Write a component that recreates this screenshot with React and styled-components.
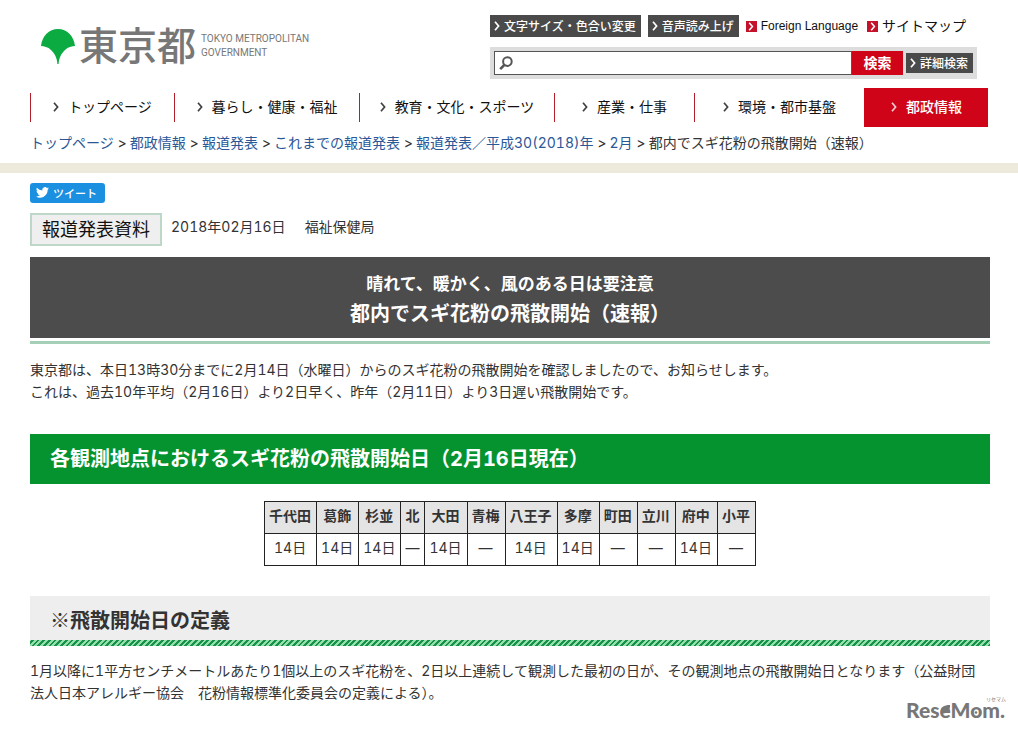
import React from "react";
import styled, { createGlobalStyle } from "styled-components";

const navItems = [
  { label: "トップページ", width: 144 },
  { label: "暮らし・健康・福祉", width: 185 },
  { label: "教育・文化・スポーツ", width: 195 },
  { label: "産業・仕事", width: 140 },
  { label: "環境・都市基盤", width: 170 },
  { label: "都政情報", width: 124, active: true },
];

const crumbs = [
  "トップページ",
  "都政情報",
  "報道発表",
  "これまでの報道発表",
  "報道発表／平成30(2018)年",
  "2月",
];

const places = [
  { name: "千代田", date: "14日" },
  { name: "葛飾", date: "14日" },
  { name: "杉並", date: "14日" },
  { name: "北", date: "—" },
  { name: "大田", date: "14日" },
  { name: "青梅", date: "—" },
  { name: "八王子", date: "14日" },
  { name: "多摩", date: "14日" },
  { name: "町田", date: "—" },
  { name: "立川", date: "—" },
  { name: "府中", date: "14日" },
  { name: "小平", date: "—" },
];

function Chevron() {
  return (
    <svg width="6" height="10" viewBox="0 0 6 10" aria-hidden="true">
      <path
        d="M1 0.8 L4.6 5 L1 9.2"
        fill="none"
        stroke="currentColor"
        strokeWidth="1.7"
      />
    </svg>
  );
}

function SearchIcon() {
  return (
    <svg width="14" height="15" viewBox="0 0 14 15" aria-hidden="true">
      <circle
        cx="8.4"
        cy="5.6"
        r="4.3"
        fill="none"
        stroke="#555"
        strokeWidth="2"
      />
      <path d="M5.4 8.8 L1.2 13.2" stroke="#555" strokeWidth="2.6" />
    </svg>
  );
}

function Bird() {
  return (
    <svg width="13" height="11" viewBox="0 0 24 20" aria-hidden="true">
      <path
        fill="#fff"
        d="M24 2.4a9.8 9.8 0 0 1-2.8.8A5 5 0 0 0 23.300.4a9.900 9.900 0 0 1-3.100 1.200 4.900 4.900 0 0 0-8.400 4.500A14 14 0 0 1 1.700 1a4.900 4.900 0 0 0 1.500 6.500 4.900 4.900 0 0 1-2.200-.6v.1a4.900 4.900 0 0 0 3.900 4.800 4.900 4.900 0 0 1-2.200.1 4.900 4.900 0 0 0 4.600 3.400A9.900 9.900 0 0 1 0 17.300a14 14 0 0 0 7.500 2.200c9.100 0 14-7.500 14-14v-.6A10 10 0 0 0 24 2.400z"
      />
    </svg>
  );
}

function Header() {
  return (
    <Top>
      <Logo href="#">
        <svg width="34" height="35" viewBox="0 0 34 35" aria-hidden="true">
          <path
            fill="#0bab41"
            d="M0 17 C1 7 8 0 17 0 C26 0 33 7 34 17 C31 17 27 18 24 21 C20 25 18 29 17.600 35 H16.400 C16 29 14 25 10 21 C7 18 3 17 0 17Z"
          />
        </svg>
        <LogoName>東京都</LogoName>
        <LogoSub>
          TOKYO METROPOLITAN
          <br />
          GOVERNMENT
        </LogoSub>
      </Logo>
      <Tools>
        <ToolRow>
          <DarkButton>
            <Chevron />
            文字サイズ・色合い変更
          </DarkButton>
          <DarkButton>
            <Chevron />
            音声読み上げ
          </DarkButton>
          <ToolLink href="#">
            <RedMark>
              <Chevron />
            </RedMark>
            <span lang="en">Foreign Language</span>
          </ToolLink>
          <ToolLink href="#">
            <RedMark>
              <Chevron />
            </RedMark>
            サイトマップ
          </ToolLink>
        </ToolRow>
        <Search onSubmit={(e) => e.preventDefault()}>
          <SearchBox>
            <SearchIcon />
            <input type="text" aria-label="検索" />
          </SearchBox>
          <SearchButton>検索</SearchButton>
          <DarkButton type="button" $low>
            <Chevron />
            詳細検索
          </DarkButton>
        </Search>
      </Tools>
    </Top>
  );
}

function App() {
  return (
    <Page>
      <GlobalStyle />
      <Header />
      <Nav>
        {navItems.map((item) => (
          <NavLink
            key={item.label}
            href="#"
            $width={item.width}
            $active={item.active}
          >
            <Chevron />
            {item.label}
          </NavLink>
        ))}
      </Nav>
      <Crumbs>
        {crumbs.map((name) => (
          <li key={name}>
            <a href="#">{name}</a>
          </li>
        ))}
        <li>都内でスギ花粉の飛散開始（速報）</li>
      </Crumbs>
      <Band />
      <Main>
        <Tweet>
          <Bird />
          ツイート
        </Tweet>
        <Meta>
          <Tag>報道発表資料</Tag>
          <span>2018年02月16日</span>
          <Bureau>福祉保健局</Bureau>
        </Meta>
        <Title>
          <small>晴れて、暖かく、風のある日は要注意</small>
          都内でスギ花粉の飛散開始（速報）
        </Title>
        <Text>
          東京都は、本日13時30分までに2月14日（水曜日）からのスギ花粉の飛散開始を確認しましたので、お知らせします。
          <br />
          これは、過去10年平均（2月16日）より2日早く、昨年（2月11日）より3日遅い飛散開始です。
        </Text>
        <GreenHeading>
          各観測地点におけるスギ花粉の飛散開始日（2月16日現在）
        </GreenHeading>
        <Table>
          <thead>
            <tr>
              {places.map((place) => (
                <th key={place.name} scope="col">
                  {place.name}
                </th>
              ))}
            </tr>
          </thead>
          <tbody>
            <tr>
              {places.map((place) => (
                <td key={place.name}>{place.date}</td>
              ))}
            </tr>
          </tbody>
        </Table>
        <GrayHeading>※飛散開始日の定義</GrayHeading>
        <Text $tight>
          1月以降に1平方センチメートルあたり1個以上のスギ花粉を、2日以上連続して観測した最初の日が、その観測地点の飛散開始日となります（公益財団法人日本アレルギー協会　花粉情報標準化委員会の定義による）。
        </Text>
      </Main>
      <Watermark>
        <small>リセマム</small>
        <svg width="100" height="26" viewBox="0 0 100 26">
          <text x="0" y="20">
            ReseMom.
          </text>
          <path d="M35 14 C34 9 38 7 44 7 C44.500 11 42 15 37 15.500Z" />
          <circle cx="70" cy="14.500" r="1.300" />
        </svg>
      </Watermark>
    </Page>
  );
}

export default App;

const GlobalStyle = createGlobalStyle`
  * {
    box-sizing: border-box;
  }
  body {
    margin: 0;
    background: #fff;
    color: #333;
    font-family: Inter, "Noto Sans CJK JP", sans-serif;
    font-size: 14px;
    line-height: 22px;
    font-variant-numeric: tabular-nums;
  }
  button, input {
    font-family: inherit;
  }
  a {
    text-decoration: none;
  }
`;

const Page = styled.div`
  position: relative;
  min-height: 100vh;
`;

const Top = styled.header`
  display: flex;
  justify-content: space-between;
  padding: 15px 41px 0;
`;

const Logo = styled.a`
  display: flex;
  align-items: center;
  height: 62px;
  color: #777;
`;

const LogoName = styled.span`
  margin-left: 4px;
  font-size: 39px;
  font-weight: 500;
  line-height: 40px;
`;

const LogoSub = styled.span`
  margin-left: 5px;
  font-family: Roboto, sans-serif;
  font-size: 10px;
  line-height: 14px;
`;

const Tools = styled.div`
  width: 487px;
`;

const ToolRow = styled.div`
  display: flex;
  align-items: center;
  gap: 7px;
  white-space: nowrap;
`;

const DarkButton = styled.button`
  display: flex;
  align-items: center;
  flex-shrink: 0;
  gap: 4px;
  height: ${(props) => (props.$low ? "20px" : "22px")};
  padding: 0 5px 1px 4px;
  border: 0;
  background: #4a4a4a;
  color: #fff;
  font-size: 12px;
  font-weight: 500;
`;

const ToolLink = styled.a`
  display: flex;
  align-items: center;
  gap: 4px;
  margin-right: 2px;
  color: #111;
  span[lang="en"] {
    font-family: "Liberation Sans", sans-serif;
    font-size: 12px;
  }
`;

const RedMark = styled.span`
  display: flex;
  align-items: center;
  justify-content: center;
  width: 11px;
  height: 11px;
  background: #c4122a;
  color: #fff;
  svg {
    height: 9px;
  }
`;

const Search = styled.form`
  display: flex;
  align-items: center;
  height: 32px;
  margin-top: 10px;
  padding: 0 4px;
  background: #ddd;
`;

const SearchBox = styled.label`
  display: flex;
  flex: 1;
  align-items: center;
  height: 24px;
  padding-left: 4px;
  border: 1px solid #555;
  background: #fff;
  input {
    flex: 1;
    min-width: 0;
    border: 0;
    outline: 0;
  }
`;

const SearchButton = styled.button`
  width: 51px;
  height: 24px;
  margin-right: 3px;
  padding: 0;
  border: 0;
  background: #cf0418;
  color: #fff;
  font-size: 14px;
  font-weight: bold;
  line-height: 22px;
`;

const Nav = styled.nav`
  display: flex;
  align-items: center;
  height: 39px;
  margin: 9px 30px 0;
`;

const NavLink = styled.a`
  display: flex;
  align-items: center;
  justify-content: center;
  gap: 9px;
  flex: 0 1 ${(props) => props.$width}px;
  height: ${(props) => (props.$active ? "39px" : "29px")};
  padding-bottom: 2px;
  border-left: 1px solid ${(props) => (props.$active ? "#cf0418" : "#b3202c")};
  background: ${(props) => (props.$active ? "#cf0418" : "#fff")};
  color: ${(props) => (props.$active ? "#fff" : "#111")};
  font-weight: ${(props) => (props.$active ? "500" : "400")};
  white-space: nowrap;
  svg {
    opacity: 0.8;
  }
`;

const Crumbs = styled.ol`
  display: flex;
  margin: 5px 0 0;
  padding: 0 30px;
  list-style: none;
  white-space: nowrap;
  a {
    color: #2b5797;
  }
  li + li::before {
    content: ">";
    margin: 0 3px 0 4px;
  }
`;

const Band = styled.div`
  height: 10px;
  margin-top: 9px;
  background: #eeeadb;
`;

const Main = styled.main`
  padding: 10px 28px 28px 30px;
`;

const Tweet = styled.button`
  display: flex;
  align-items: center;
  gap: 4px;
  height: 20px;
  padding: 0 8px 1px 6px;
  border: 0;
  border-radius: 3px;
  background: #1b90e0;
  color: #fff;
  font-size: 11px;
  font-weight: 500;
`;

const Meta = styled.div`
  display: flex;
  align-items: flex-start;
  margin-top: 10px;
  line-height: 28px;
`;

const Tag = styled.span`
  margin-right: 9px;
  padding: 4px 10px 3px;
  border: 2px solid #bdd8c8;
  background: #efefef;
  color: #111;
  font-size: 18px;
  line-height: 22px;
`;

const Bureau = styled.span`
  margin-left: 19px;
`;

const Title = styled.h1`
  margin: 11px 0 0;
  padding: 12px 0 9px;
  background: #4c4c4c;
  border-bottom: 3px solid #fff;
  box-shadow: 0 3px 0 #a5cfb6;
  color: #fff;
  font-size: 20px;
  line-height: 30px;
  text-align: center;
  small {
    display: block;
    font-size: 17px;
  }
`;

const Text = styled.p`
  margin: ${(props) => (props.$tight ? "14px" : "18px")} 0 0;
  padding-right: 10px;
`;

const GreenHeading = styled.h2`
  margin: 31px 0 0;
  padding: 0 20px;
  background: #04932f;
  color: #fff;
  font-size: 20px;
  line-height: 50px;
`;

const Table = styled.table`
  margin: 17px auto 0;
  border-collapse: collapse;
  text-align: center;
  th,
  td {
    height: 32px;
    padding: 0 5px 3px 4px;
    border: 1px solid #222;
  }
  th {
    background: #e4e4e4;
  }
`;

const GrayHeading = styled.h2`
  margin: 30px 0 0;
  padding: 4px 20px 0;
  background: #eee;
  font-family: "Noto Sans CJK JP", sans-serif;
  font-size: 20px;
  line-height: 40px;
  &::after {
    content: "";
    display: block;
    height: 6px;
    margin: 0 -20px;
    background: repeating-linear-gradient(
      -45deg,
      #16904a 0 2px,
      #93e0aa 2px 4px
    );
  }
`;

const Watermark = styled.div`
  position: absolute;
  right: 12px;
  bottom: 9px;
  display: flex;
  flex-direction: column;
  align-items: flex-end;
  color: #777;
  small {
    margin-bottom: -4px;
    font-size: 5px;
    line-height: 6px;
  }
  svg {
    display: block;
    fill: currentColor;
    font-family: Lato, sans-serif;
    font-size: 21px;
    font-weight: 900;
  }
`;
